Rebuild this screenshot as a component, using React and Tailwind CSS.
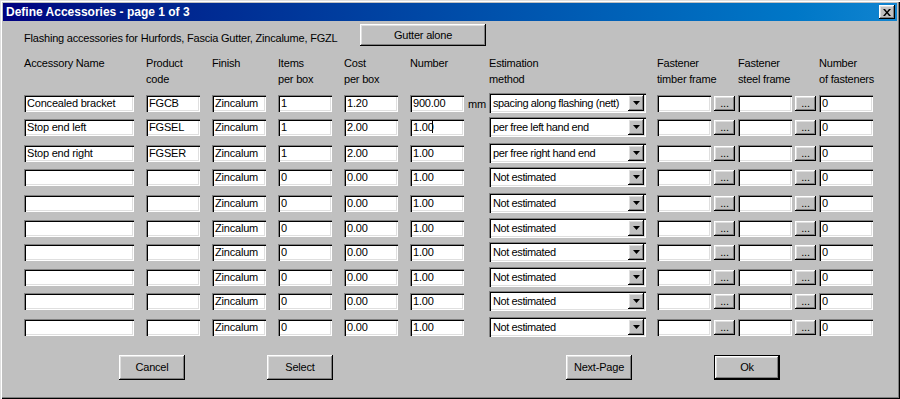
import React from "react";

const SUNKEN = "shadow-[inset_1px_1px_#808080,inset_2px_2px_#000,inset_-1px_-1px_#fff,inset_-2px_-2px_#dfdfdf]";
const RAISED = "shadow-[inset_-1px_-1px_#000,inset_1px_1px_#fff,inset_-2px_-2px_#808080,inset_2px_2px_#dfdfdf]";

const ROWS = [
  { name: "Concealed bracket", code: "FGCB", items: "1", cost: "1.20", number: "900.00", mm: true, method: "spacing along flashing (nett)" },
  { name: "Stop end left", code: "FGSEL", items: "1", cost: "2.00", number: "1.00", caret: true, method: "per free left hand end" },
  { name: "Stop end right", code: "FGSER", items: "1", cost: "2.00", number: "1.00", method: "per free right hand end" },
  ...Array.from({ length: 7 }, () => ({ name: "", code: "", items: "0", cost: "0.00", number: "1.00", method: "Not estimated" })),
];

// rows in the original aren't evenly pitched, keep the gaps as measured
const ROW_GAP = ["mt-[6px]", "mt-[4px]", "mt-[6px]", "mt-[4px]", "mt-[6px]", "mt-[5px]", "mt-[4px]", "mt-[5px]", "mt-[4px]", "mt-[6px]"];

function Field({ value, className = "", children }) {
  return (
    <div className={`h-[17px] bg-white ${SUNKEN} pl-[3px] flex items-center overflow-hidden whitespace-nowrap ${className}`}>
      {value}
      {children}
    </div>
  );
}

function Combo({ value }) {
  return (
    <div className={`w-[157px] h-[20px] bg-white ${SUNKEN} pl-[4px] pr-[2px] flex items-center`}>
      <span className="flex-1 whitespace-nowrap overflow-hidden tracking-[-0.4px]">{value}</span>
      <span className={`w-[16px] h-[16px] bg-[#c0c0c0] ${RAISED} flex items-center justify-center`}>
        <svg width="7" height="4" viewBox="0 0 7 4"><path d="M0 0h7L3.5 4z" fill="#000" /></svg>
      </span>
    </div>
  );
}

function DotsButton({ className = "" }) {
  return (
    <div className={`w-[21px] h-[15px] bg-[#c0c0c0] ${RAISED} flex items-end justify-center pb-[2px] leading-none text-[11px] ${className}`}>
      ...
    </div>
  );
}

function Button({ label, size = "w-[66px] h-[25px]", className = "", isDefault }) {
  if (isDefault) {
    return (
      <div className={`${size} border border-black ${className}`}>
        <div className={`w-full h-full bg-[#c0c0c0] ${RAISED} flex items-center justify-center`}>{label}</div>
      </div>
    );
  }
  return (
    <div className={`${size} bg-[#c0c0c0] ${RAISED} flex items-center justify-center ${className}`}>{label}</div>
  );
}

export default function App() {
  return (
    <div className="w-[900px] h-[399px] bg-[#c0c0c0] p-[3px] shadow-[inset_1px_1px_#dfdfdf,inset_2px_2px_#fff,inset_-1px_-1px_#000,inset_-2px_-2px_#808080] font-['Liberation_Sans',Arial,sans-serif] text-[11px] tracking-[-0.2px] text-black overflow-hidden">
      {/* title bar */}
      <div className="h-[18px] bg-linear-to-r from-[#000080] to-[#1084d0] flex items-center pl-[3px] pr-[2px]">
        <span className="flex-1 text-white font-bold text-[12px] tracking-normal leading-none">Define Accessories - page 1 of 3</span>
        <span className={`w-[16px] h-[14px] bg-[#c0c0c0] ${RAISED} flex items-center justify-center`}>
          <svg width="8" height="7" viewBox="0 0 8 7">
            <path d="M0 0h2l2 2.5L6 0h2L5 3.5 8 7H6L4 4.5 2 7H0l3-3.5z" fill="#000" />
          </svg>
        </span>
      </div>

      <div className="pl-[21px]">
        <div className="mt-[3px] flex items-start">
          <div className="w-[336px] mt-[8px] leading-[13px] whitespace-nowrap">
            Flashing accessories for Hurfords, Fascia Gutter, Zincalume, FGZL
          </div>
          <Button label="Gutter alone" size="w-[126px] h-[22px]" />
        </div>

        <div className="mt-[9px] flex leading-[16px] whitespace-nowrap">
          <div className="w-[122px]">Accessory Name</div>
          <div className="w-[66px]">Product<br />code</div>
          <div className="w-[66px]">Finish</div>
          <div className="w-[66px]">Items<br />per box</div>
          <div className="w-[66px]">Cost<br />per box</div>
          <div className="w-[79px]">Number</div>
          <div className="w-[168px]">Estimation<br />method</div>
          <div className="w-[81px]">Fastener<br />timber frame</div>
          <div className="w-[81px]">Fastener<br />steel frame</div>
          <div>Number<br />of fasteners</div>
        </div>

        {ROWS.map((r, i) => (
          <div key={i} className={`${ROW_GAP[i]} h-[20px] flex items-center`}>
            <Field value={r.name} className="w-[110px]" />
            <Field value={r.code} className="w-[54px] ml-[12px]" />
            <Field value="Zincalum" className="w-[54px] ml-[12px] pl-[2px]" />
            <Field value={r.items} className="w-[54px] ml-[12px]" />
            <Field value={r.cost} className="w-[54px] ml-[12px]" />
            <Field value={r.number} className="w-[54px] ml-[12px]">
              {r.caret && <span className="inline-block w-[1px] h-[12px] bg-black -ml-[2px]" />}
            </Field>
            <div className="w-[25px] pl-[4px] pt-[2px]">{r.mm ? "mm" : ""}</div>
            <Combo value={r.method} />
            <Field value="" className="w-[54px] ml-[11px]" />
            <DotsButton className="ml-[3px]" />
            <Field value="" className="w-[54px] ml-[3px]" />
            <DotsButton className="ml-[3px]" />
            <Field value="0" className="w-[54px] ml-[3px]" />
          </div>
        ))}

        <div className="mt-[18px] flex">
          <Button label="Cancel" className="ml-[95px]" />
          <Button label="Select" className="ml-[82px]" />
          <Button label="Next-Page" className="ml-[233px]" />
          <Button label="Ok" isDefault className="ml-[82px]" />
        </div>
      </div>
    </div>
  );
}
